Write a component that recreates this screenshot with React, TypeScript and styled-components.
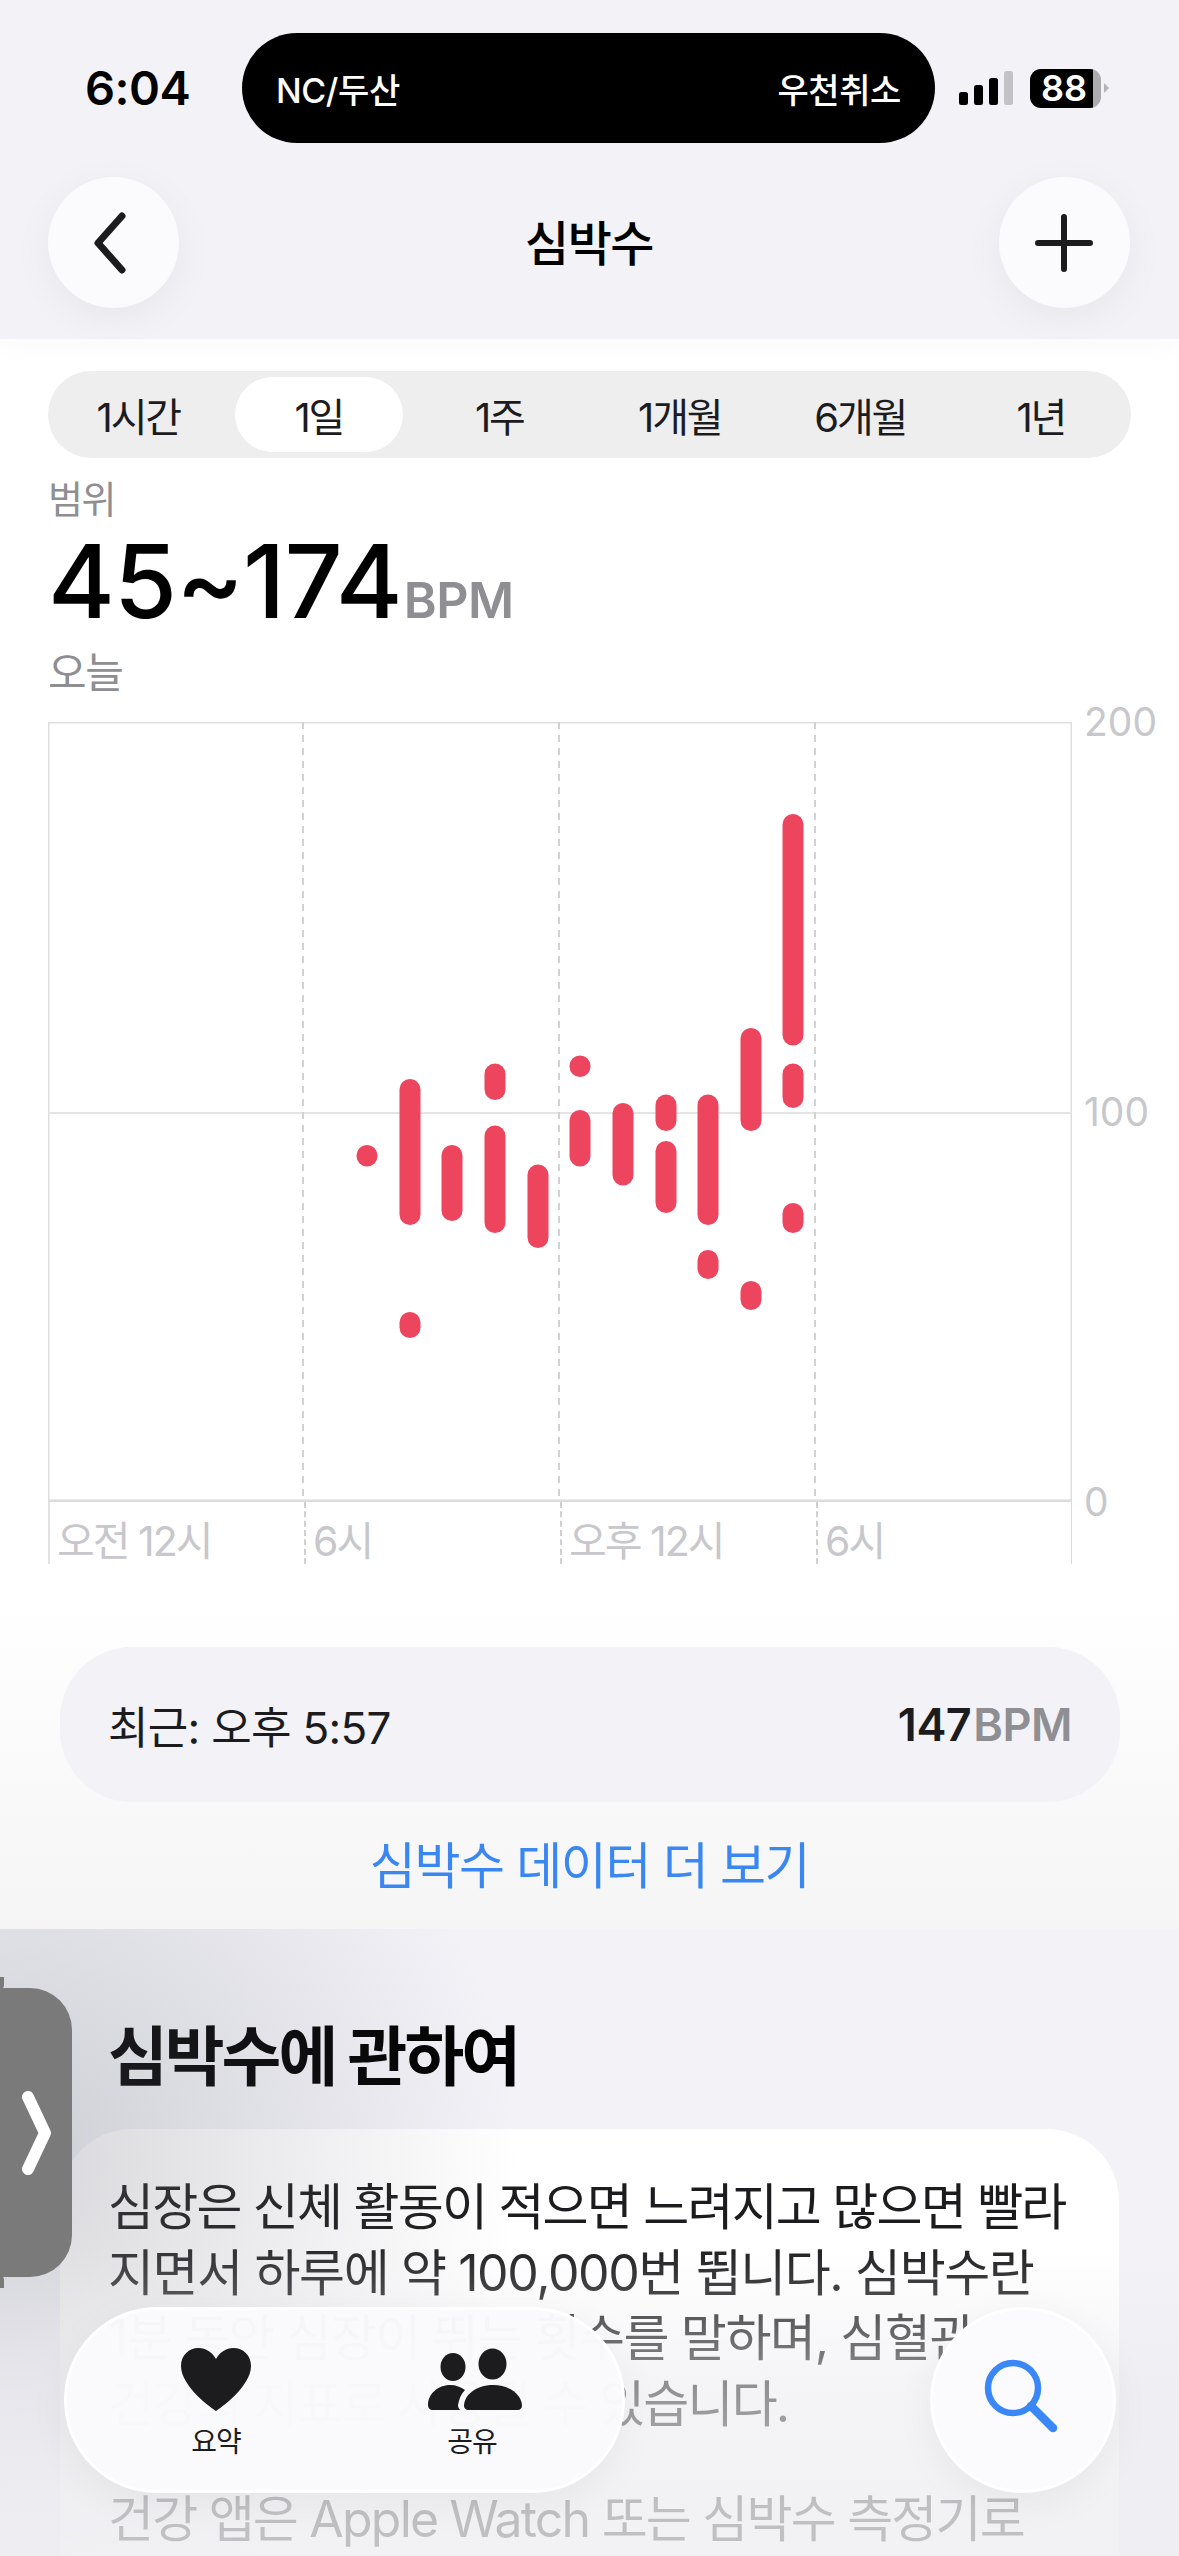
import React from "react";
import styled, { createGlobalStyle } from "styled-components";

const Global = createGlobalStyle`
  html, body { margin: 0; padding: 0; background: #fff; }
  * { box-sizing: border-box; }
  body { font-family: Inter, "Noto Sans CJK KR", "Noto Sans", sans-serif; color: #000; }
`;

const Screen = styled.div`
  position: relative;
  width: 1179px;
  height: 2556px;
  overflow: hidden;
  background: #fff;
`;

const Header = styled.header`
  height: 339px;
  background: #f2f2f7;
  display: flex;
  flex-direction: column;
  position: relative;
  box-shadow: 0 8px 30px rgba(0, 0, 0, 0.025);
`;

const StatusBar = styled.div`
  display: grid;
  grid-template-columns: 242px 693px 1fr;
  padding-top: 33px;
  height: 177px;
  align-items: start;
`;

const Time = styled.div`
  height: 110px;
  line-height: 110px;
  padding-left: 85px;
  font-size: 47px;
  font-weight: 600;
  letter-spacing: -0.5px;
`;

const Island = styled.div`
  height: 110px;
  border-radius: 55px;
  background: #000;
  color: #fff;
  display: flex;
  justify-content: space-between;
  align-items: center;
  padding: 0 34px;
  font-size: 34px;
  font-weight: 500;
  letter-spacing: -0.4px;
`;

const StatusRight = styled.div`
  height: 110px;
  display: flex;
  align-items: center;
  padding-left: 24px;
  gap: 17px;
`;

const Signal = styled.div`
  display: flex;
  align-items: flex-end;
  gap: 6px;
`;

const SignalBar = styled.span<{ $h: number; $off?: boolean }>`
  width: 9px;
  height: ${(p) => p.$h}px;
  border-radius: 2.5px;
  background: ${(p) => (p.$off ? "#c3c3c6" : "#000")};
`;

const Battery = styled.div`
  position: relative;
  width: 71px;
  height: 39px;
  border-radius: 11px;
  background: linear-gradient(90deg, #000 0 89%, #adadb0 89% 100%);
  color: #fff;
  font-size: 36px;
  line-height: 39px;
  font-weight: 600;
  padding-left: 11px;
  letter-spacing: 0;
  &::after {
    content: "";
    position: absolute;
    left: 74px;
    top: 14px;
    border-left: 5px solid #b4b4b7;
    border-top: 5.5px solid transparent;
    border-bottom: 5.5px solid transparent;
  }
`;

const NavBar = styled.div`
  display: flex;
  justify-content: space-between;
  align-items: center;
  padding: 0 49px 0 48px;
  height: 131px;
`;

const RoundButton = styled.button`
  width: 131px;
  height: 131px;
  border: 0;
  padding: 0;
  border-radius: 50%;
  background: #fbfbfe;
  box-shadow: 0 10px 40px rgba(0, 0, 0, 0.05);
  display: flex;
  align-items: center;
  justify-content: center;
  color: #1c1c1e;
`;

const Title = styled.h1`
  margin: -5px 0 0;
  font-size: 48px;
  font-weight: 500;
  letter-spacing: -1.5px;
`;

const Main = styled.section`
  height: 1590px;
  padding: 32px 48px 0;
  background: linear-gradient(180deg, #fff 0, #fff 1250px, #f5f5f6 1590px);
  display: flex;
  flex-direction: column;
`;

const Segments = styled.div`
  flex: none;
  height: 87px;
  border-radius: 43.5px;
  background: #eeeeef;
  display: grid;
  grid-template-columns: repeat(6, 1fr);
  width: 1083px;
`;

const Segment = styled.div<{ $active?: boolean }>`
  display: flex;
  align-items: center;
  justify-content: center;
  margin: 6px;
  border-radius: 38px;
  font-size: 40px;
  letter-spacing: -2.2px;
  color: #1c1c1e;
  background: ${(p) => (p.$active ? "#fff" : "transparent")};
`;

const Caption = styled.div<{ $size: number }>`
  color: #8e8e93;
  font-size: ${(p) => p.$size}px;
  letter-spacing: -1.5px;
  line-height: 46px;
`;

const RangeLabel = styled(Caption)`
  margin-top: 18px;
`;

const RangeRow = styled.div`
  display: flex;
  align-items: baseline;
  line-height: 118px;
  height: 118px;
  margin-bottom: 10px;
`;

const RangeValue = styled.span`
  font-size: 102px;
  font-weight: 500;
  letter-spacing: -1px;
  color: #000;
`;

const Unit = styled.span<{ $size: number }>`
  font-size: ${(p) => p.$size}px;
  font-weight: 600;
  color: #8e8e93;
  letter-spacing: -0.5px;
  margin-left: 2px;
`;

const Chart = styled.div`
  display: grid;
  grid-template-columns: 1024px 1fr;
  margin-top: 26px;
`;

const PlotColumn = styled.div`
  display: flex;
  flex-direction: column;
`;

const Plot = styled.svg`
  display: block;
  width: 1024px;
  height: 780px;
`;

const XAxis = styled.div`
  display: grid;
  grid-template-columns: repeat(4, 256px);
  height: 62px;
  border-right: 1.5px solid #dcdcdc;
`;

const XLabel = styled.div<{ $solid?: boolean }>`
  border-left: 2px ${(p) => (p.$solid ? "solid #e2e2e2" : "dashed #d0d0d0")};
  padding: 16px 0 0 7px;
  font-size: 41px;
  line-height: 46px;
  letter-spacing: -2px;
  color: #c7c7cc;
  white-space: nowrap;
`;

const YAxis = styled.div`
  margin-top: -24px;
  height: 828px;
  display: flex;
  flex-direction: column;
  justify-content: space-between;
  padding-left: 12px;
  font-size: 39px;
  line-height: 48px;
  color: #c7c7cc;
`;

const LatestCard = styled.div`
  margin: 83px 11px 0 12px;
  height: 155px;
  border-radius: 72px;
  background: #f2f2f7;
  display: flex;
  justify-content: space-between;
  align-items: center;
  padding: 0 48px;
  font-size: 44px;
  letter-spacing: -0.7px;
  color: #1c1c1e;
`;

const LatestValue = styled.span`
  font-weight: 600;
  color: #1c1c1e;
  font-size: 45px;
  letter-spacing: -0.5px;
`;

const MoreLink = styled.div`
  margin-top: 33px;
  text-align: center;
  font-size: 50px;
  line-height: 62px;
  letter-spacing: -1.4px;
  color: #3a87f2;
`;

const About = styled.section`
  position: relative;
  height: 627px;
  background: #f2f2f7;
  padding: 90px 60px 0;
`;

const AboutTitle = styled.h2`
  margin: 0 0 0 48px;
  font-size: 65px;
  line-height: 76px;
  font-weight: 700;
  letter-spacing: -3px;
  color: #000;
`;

const AboutCard = styled.div`
  margin-top: 34px;
  height: 440px;
  border-radius: 72px 72px 0 0;
  background: #fff;
  padding: 46px 40px 0 48px;
  font-size: 50px;
  line-height: 65.5px;
  color: #1c1c1e;
`;

const AboutLine = styled.div<{ $gap?: boolean; $loose?: boolean }>`
  white-space: nowrap;
  margin-top: ${(p) => (p.$gap ? "50px" : "0")};
  letter-spacing: ${(p) => (p.$loose ? "-1.4px" : "-1.8px")};
`;

const AboutShade = styled.div`
  position: absolute;
  left: 0;
  top: 0;
  right: 0;
  bottom: 0;
  pointer-events: none;
  background:
    linear-gradient(180deg, rgba(240, 240, 244, 0) 50%, rgba(236, 236, 240, 0.55) 72%, rgba(238, 238, 242, 0.78) 92%),
    radial-gradient(520px 480px at 0 230px, rgba(120, 120, 135, 0.3), rgba(120, 120, 135, 0) 100%);
`;

const SideHandle = styled.div`
  position: absolute;
  left: 0;
  top: 1988px;
  width: 72px;
  height: 289px;
  border-radius: 0 42px 42px 0;
  background: #7a7a7a;
  display: flex;
  align-items: center;
  padding-left: 16px;
  &::before,
  &::after {
    content: "";
    position: absolute;
    left: 0;
    width: 4px;
    height: 12px;
    background: #7a7a7a;
  }
  &::before { top: -11px; border-radius: 0 0 4px 0; }
  &::after { bottom: -11px; border-radius: 0 4px 0 0; }
`;

const TabBar = styled.nav`
  position: absolute;
  left: 64px;
  top: 2307px;
  width: 561px;
  height: 186px;
  border-radius: 93px;
  border: 3px solid #fff;
  background: rgba(250, 250, 253, 0.975);
  box-shadow: 0 10px 40px rgba(0, 0, 0, 0.05);
  display: flex;
  padding: 0 21px;
`;

const Tab = styled.div`
  width: 256px;
  display: flex;
  flex-direction: column;
  align-items: center;
  padding-top: 38px;
`;

const TabLabel = styled.div`
  margin-top: 14px;
  font-size: 28px;
  line-height: 34px;
  letter-spacing: -1px;
  color: #1c1c1e;
`;

const PeopleIcon = styled.svg`
  margin-left: 6px;
`;

const BackIcon = styled.svg`
  margin-left: -8px;
`;

const SearchButton = styled.button`
  position: absolute;
  left: 930px;
  top: 2307px;
  width: 186px;
  height: 186px;
  border: 3px solid #fff;
  border-radius: 50%;
  padding: 0;
  background: #fbfbfe;
  box-shadow: 0 10px 40px rgba(0, 0, 0, 0.05);
  display: flex;
  align-items: center;
  justify-content: center;
`;

const SearchIcon = styled.svg`
  margin-left: 6px;
  margin-top: 2px;
`;

const OX = 48;
const OY = 722;
const bars: [number, number, number][] = [
  [367, 1145, 1166.5],
  [410, 1079, 1225], [410, 1312, 1338],
  [452, 1145, 1221],
  [495, 1063.5, 1100], [495, 1125.5, 1233],
  [538, 1164.5, 1248],
  [580, 1055.5, 1077], [580, 1110, 1166.5],
  [623, 1103, 1185.5],
  [666, 1094.5, 1131], [666, 1141, 1213],
  [708, 1094.5, 1225], [708, 1250, 1279],
  [751, 1028, 1131], [751, 1281, 1310],
  [793, 814, 1045.5], [793, 1063.5, 1108], [793, 1203, 1233],
];

const segments = ["1시간", "1일", "1주", "1개월", "6개월", "1년"];

export default function App() {
  return (
    <Screen>
      <Global />
      <Header>
        <StatusBar>
          <Time>6:04</Time>
          <Island>
            <span>NC/두산</span>
            <span>우천취소</span>
          </Island>
          <StatusRight>
            <Signal>
              <SignalBar $h={13} />
              <SignalBar $h={20} />
              <SignalBar $h={27} />
              <SignalBar $h={34} $off />
            </Signal>
            <Battery>88</Battery>
          </StatusRight>
        </StatusBar>
        <NavBar>
          <RoundButton aria-label="뒤로">
            <BackIcon width="44" height="66" viewBox="0 0 44 66" fill="none">
              <path d="M34 6 L10 33 L34 60" stroke="#1c1c1e" strokeWidth="7" strokeLinecap="round" strokeLinejoin="round" />
            </BackIcon>
          </RoundButton>
          <Title>심박수</Title>
          <RoundButton aria-label="추가">
            <svg width="60" height="60" viewBox="0 0 60 60" fill="none">
              <path d="M30 4 V56 M4 30 H56" stroke="#1c1c1e" strokeWidth="6" strokeLinecap="round" />
            </svg>
          </RoundButton>
        </NavBar>
      </Header>

      <Main>
        <Segments>
          {segments.map((s, i) => (
            <Segment key={s} $active={i === 1}>{s}</Segment>
          ))}
        </Segments>
        <RangeLabel $size={38}>범위</RangeLabel>
        <RangeRow>
          <RangeValue>45~174</RangeValue>
          <Unit $size={50}>BPM</Unit>
        </RangeRow>
        <Caption $size={42}>오늘</Caption>
        <Chart>
          <PlotColumn>
            <Plot viewBox="0 0 1024 780">
              <rect x="0.75" y="0.75" width="1022.5" height="778" fill="none" stroke="#dedede" strokeWidth="1.5" />
              <line x1="0" x2="1024" y1="391" y2="391" stroke="#e4e4e4" strokeWidth="2" />
              <line x1="0" x2="1024" y1="778.7" y2="778.7" stroke="#dcdcdc" strokeWidth="2.5" />
              {[255, 511, 767].map((x) => (
                <line key={x} x1={x} x2={x} y1="0" y2="780" stroke="#d2d2d2" strokeWidth="2" strokeDasharray="7 6" />
              ))}
              {bars.map(([cx, t, b]) => (
                <rect key={`${cx}-${t}`} x={cx - OX - 10.5} y={t - OY} width="21" height={b - t} rx="10.5" ry="10.5" fill="#ec455d" />
              ))}
            </Plot>
            <XAxis>
              <XLabel $solid>오전 12시</XLabel>
              <XLabel>6시</XLabel>
              <XLabel>오후 12시</XLabel>
              <XLabel>6시</XLabel>
            </XAxis>
          </PlotColumn>
          <YAxis>
            <span>200</span>
            <span>100</span>
            <span>0</span>
          </YAxis>
        </Chart>
        <LatestCard>
          <span>최근: 오후 5:57</span>
          <LatestValue>147<Unit $size={45}>BPM</Unit></LatestValue>
        </LatestCard>
        <MoreLink>심박수 데이터 더 보기</MoreLink>
      </Main>

      <About>
        <AboutTitle>심박수에 관하여</AboutTitle>
        <AboutCard>
          <AboutLine>심장은 신체 활동이 적으면 느려지고 많으면 빨라</AboutLine>
          <AboutLine $loose>지면서 하루에 약 100,000번 뜁니다. 심박수란</AboutLine>
          <AboutLine $loose>1분 동안 심장이 뛰는 횟수를 말하며, 심혈관</AboutLine>
          <AboutLine>건강의 지표로 사용될 수 있습니다.</AboutLine>
          <AboutLine $gap>건강 앱은 Apple Watch 또는 심박수 측정기로</AboutLine>
        </AboutCard>
        <AboutShade />
      </About>

      <SideHandle>
        <svg width="36" height="84" viewBox="0 0 36 84" fill="none">
          <path d="M12 6 L29 42 L12 78" stroke="#fff" strokeWidth="12" strokeLinecap="round" strokeLinejoin="round" />
        </svg>
      </SideHandle>

      <TabBar>
        <Tab>
          <svg width="70" height="63" viewBox="0 0 70 63">
            <path d="M35 63 C32 61 0 39 0 18 C0 7 8 0 17.5 0 C25 0 31 4 35 11 C39 4 45 0 52.5 0 C62 0 70 7 70 18 C70 39 38 61 35 63 Z" fill="#1c1c1e" />
          </svg>
          <TabLabel>요약</TabLabel>
        </Tab>
        <Tab>
          <PeopleIcon width="94" height="63" viewBox="0 0 94 63">
            <ellipse cx="25" cy="19" rx="12.5" ry="14" fill="#1c1c1e" />
            <ellipse cx="64.5" cy="16" rx="14" ry="15.5" fill="#1c1c1e" />
            <path d="M0 57 C0 46 10 37 22 37 C28 37 33 39 37 42 C33 46 31 51 30 57 C30 59 31 61 32 62 H5 C2 62 0 60 0 57 Z" fill="#1c1c1e" />
            <path d="M36 58 C36 47 48 37 65 37 C82 37 94 47 94 58 C94 60 92 62 90 62 H40 C38 62 36 60 36 58 Z" fill="#1c1c1e" />
          </PeopleIcon>
          <TabLabel>공유</TabLabel>
        </Tab>
      </TabBar>

      <SearchButton aria-label="검색">
        <SearchIcon width="92" height="92" viewBox="0 0 92 92" fill="none">
          <circle cx="33" cy="33" r="25" stroke="#3a87f7" strokeWidth="6.5" />
          <path d="M51 51 L73 73" stroke="#3a87f7" strokeWidth="8.5" strokeLinecap="round" />
        </SearchIcon>
      </SearchButton>
    </Screen>
  );
}
